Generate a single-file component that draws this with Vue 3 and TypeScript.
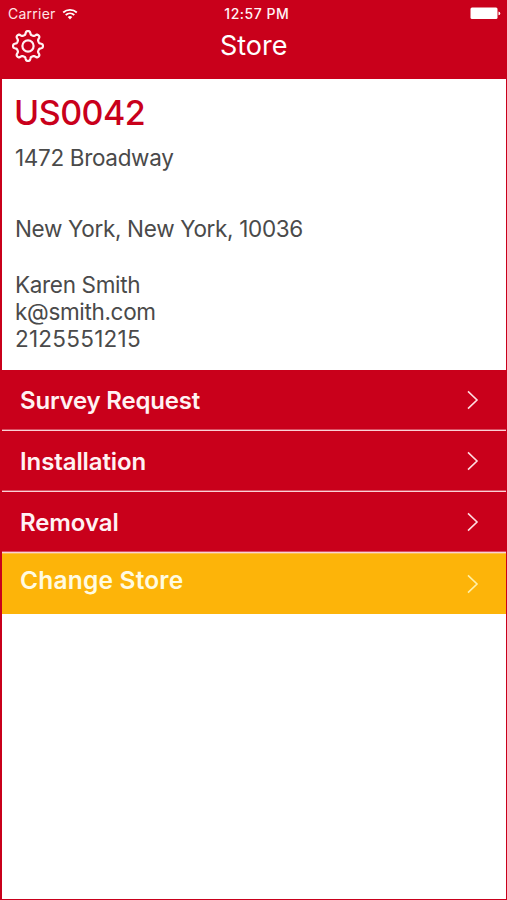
<script setup lang="ts">
interface Action {
  key: string
  label: string
  accent?: boolean
}

const actions: Action[] = [
  { key: 'survey', label: 'Survey Request' },
  { key: 'install', label: 'Installation' },
  { key: 'removal', label: 'Removal' },
  { key: 'change', label: 'Change Store', accent: true },
]

// Eight rounded teeth around a 34px box, traced as a smooth polar curve.
function gearOutline(): string {
  const points: string[] = []
  for (let deg = 0; deg < 360; deg += 2) {
    const a = (deg * Math.PI) / 180
    const r = 13.2 + 1.9 * Math.tanh(1.9 * Math.cos(8 * a) - 0.3)
    points.push(`${(17 + r * Math.cos(a)).toFixed(2)} ${(17 + r * Math.sin(a)).toFixed(2)}`)
  }
  return `M${points.join('L')}Z`
}
const gear = gearOutline()
</script>

<template>
  <div class="screen">
    <header class="top">
      <div class="status">
        <div class="carrier">
          <span class="carrier-name">Carrier</span>
          <svg class="wifi" width="16" height="12" viewBox="0 0 16 12">
            <path d="M1.2 4.5a10 10 0 0 1 13.6 0M3.7 7a6.4 6.4 0 0 1 8.6 0" fill="none" stroke="#fff" stroke-width="1.8" />
            <path d="M5.7 9a3.5 3.5 0 0 1 4.6 0L8 11.5z" fill="#fff" />
          </svg>
        </div>
        <span class="clock">12:57 PM</span>
        <svg class="battery" width="31" height="13" viewBox="0 0 31 13">
          <rect x="0.5" y="0.5" width="27" height="11.5" rx="1.5" fill="#fff" />
          <path d="M28.5 4.5q1.8.5 1.8 1.9t-1.8 1.9z" fill="#fff" />
        </svg>
      </div>
      <div class="nav">
        <svg class="gear" width="34" height="34" viewBox="0 0 34 34" fill="none" stroke="#fff0f2" stroke-width="2.2">
          <path :d="gear" stroke-linejoin="round" />
          <circle cx="17" cy="17" r="5.6" />
        </svg>
        <h1 class="title">Store</h1>
      </div>
    </header>
    <main class="body">
      <section class="store">
        <h2 class="code">US0042</h2>
        <p class="street">1472 Broadway</p>
        <p class="city">New York, New York, 10036</p>
        <p class="name">Karen Smith</p>
        <p class="mail">k@smith.com</p>
        <p class="phone">2125551215</p>
      </section>
      <nav class="actions">
        <div v-for="item in actions" :key="item.key" class="row" :class="{ accent: item.accent }">
          <span class="label" :class="item.key">{{ item.label }}</span>
          <svg class="chevron" width="14" height="20" viewBox="0 0 14 20">
            <path d="M2 1.3 11 10l-9 8.7" fill="none" stroke="currentColor" stroke-width="1.6" />
          </svg>
        </div>
      </nav>
    </main>
  </div>
</template>

<style>
body {
  background: #c9001b;
}
</style>

<style scoped>
.screen {
  box-sizing: border-box;
  display: flex;
  flex-direction: column;
  width: 507px;
  height: 900px;
  overflow: hidden;
  padding: 0 1.5px 1.5px 2px;
  background: #c9001b;
  font-family: Inter, Roboto, "Liberation Sans", sans-serif;
}
.top {
  box-sizing: border-box;
  height: 79px;
  flex: none;
  color: #fff;
}
.status {
  display: grid;
  grid-template-columns: 1fr auto 1fr;
  align-items: center;
  height: 27px;
  padding: 0 5px 0 6px;
}
.carrier {
  display: flex;
  align-items: center;
  gap: 6px;
}
.carrier-name {
  font-size: 14px;
  letter-spacing: 0.25px;
  color: #ffe3e6;
}
.clock {
  font-size: 14px;
  font-weight: 500;
  letter-spacing: 0.5px;
  color: #fff4f5;
  margin-left: 5px;
}
.battery {
  justify-self: end;
}
.nav {
  display: grid;
  grid-template-columns: 44px 1fr 44px;
  align-items: center;
  height: 38px;
  padding: 0 9px 0 9px;
}
.title {
  margin: 0;
  text-align: center;
  font-size: 27px;
  font-weight: 400;
  line-height: 38px;
}
.body {
  flex: 1;
  background: #fff;
}
.store {
  box-sizing: border-box;
  height: 291px;
  padding: 12px 13px 0;
  color: #4a4a4a;
}
.code {
  margin: 0 0 0 -1px;
  font-size: 34px;
  font-weight: 500;
  line-height: 44px;
  letter-spacing: -0.5px;
  color: #c9001b;
}
.store p {
  margin: 0;
  width: max-content;
  font-size: 22.5px;
  line-height: 27px;
  letter-spacing: -0.33px;
}
.store .street {
  margin-top: 9px;
}
.store .city {
  margin-top: 44px;
}
.store .name {
  margin-top: 29px;
}
.store .phone {
  letter-spacing: 0.25px;
}
.row {
  box-sizing: border-box;
  display: flex;
  align-items: center;
  justify-content: space-between;
  height: 61px;
  padding: 0 26px 0 18px;
  border-bottom: 1px solid #fbd0d5;
  background: #c9001b;
  box-shadow: inset 0 -1px #d95062;
  color: #fff2f3;
}
.label {
  padding-top: 2px;
  font-size: 24px;
  font-weight: 600;
  line-height: 30px;
  letter-spacing: -0.2px;
}
.label.install,
.label.removal {
  letter-spacing: -0.1px;
}
.row.accent {
  border-bottom: 0;
  background: #fdb409;
  box-shadow: inset 0 1px #fec04a;
  color: #fffbe2;
}
.label.change {
  padding: 0 0 8px;
  font-size: 24.5px;
  letter-spacing: 0.2px;
}
.chevron {
  color: #ffdce0;
}
.accent .chevron {
  color: #fff0a8;
}
</style>
